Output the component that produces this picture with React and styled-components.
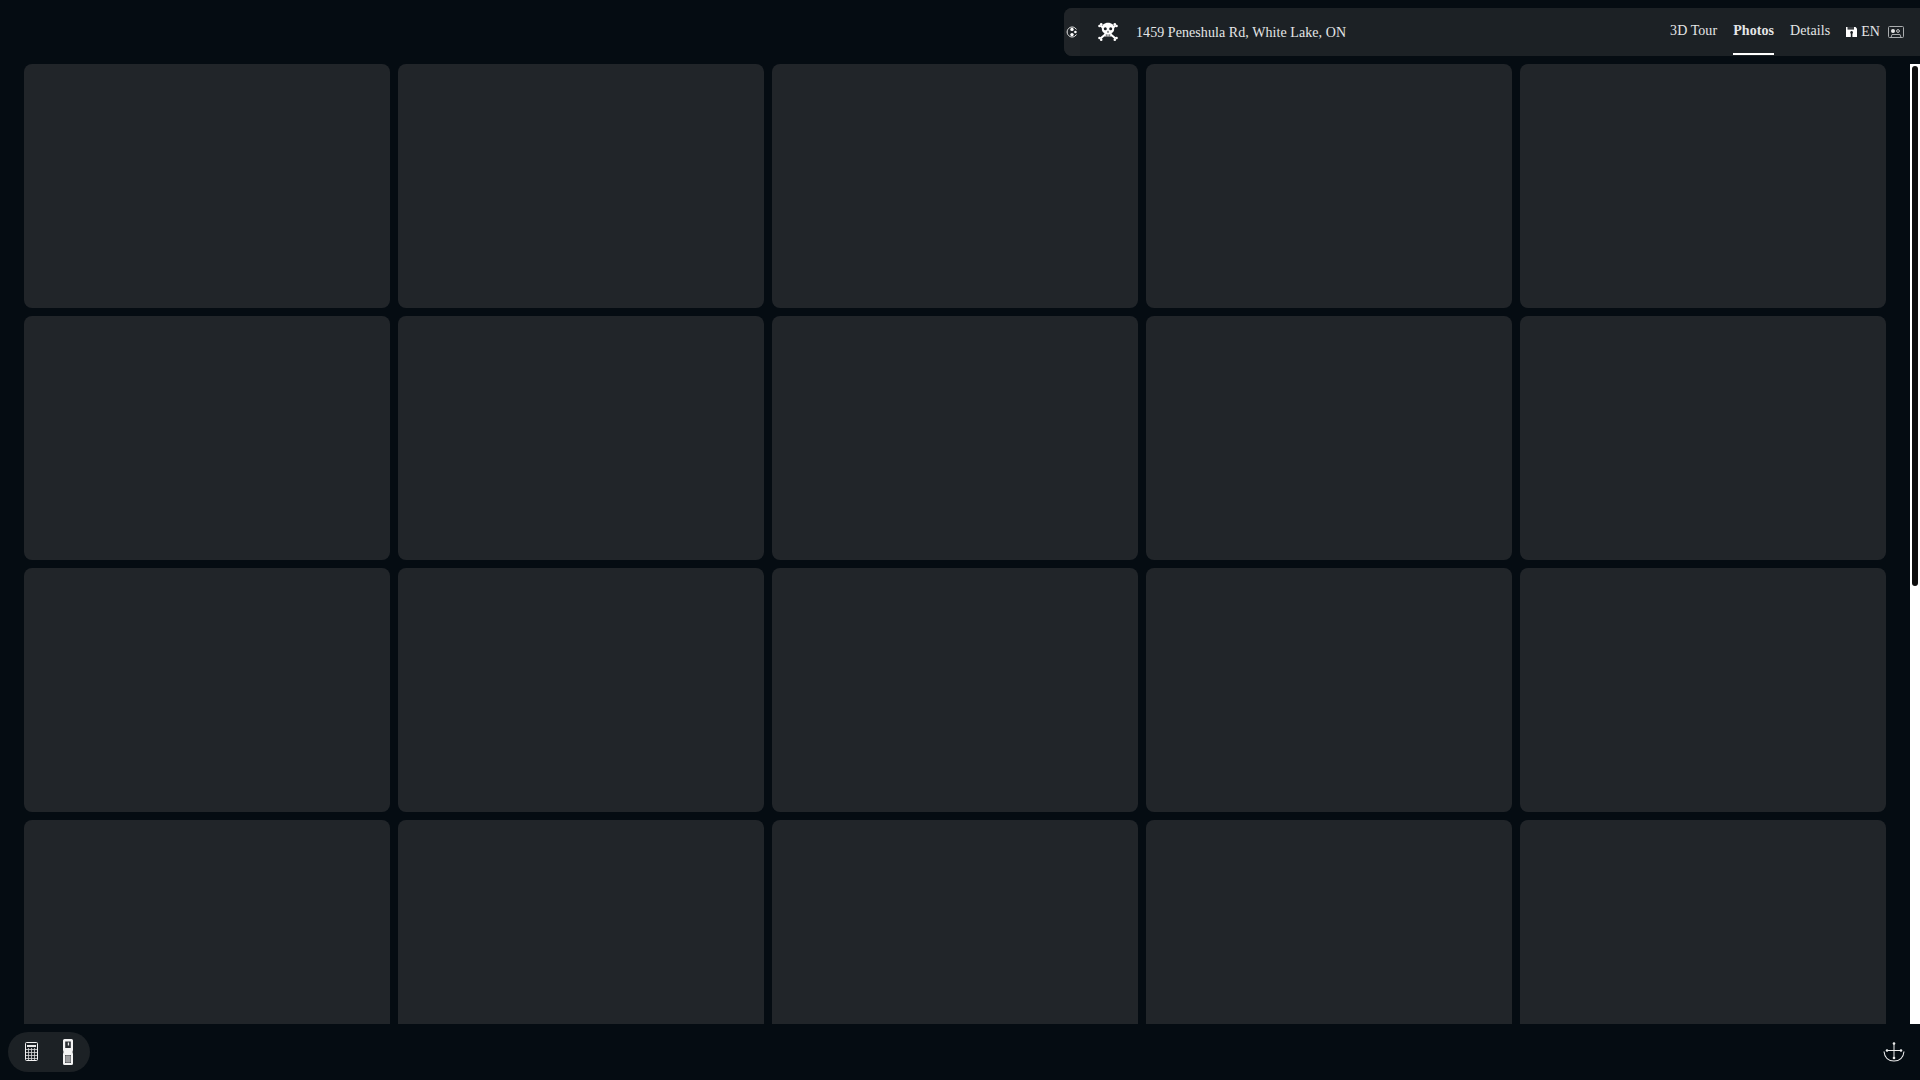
import styled, { createGlobalStyle } from 'styled-components'

const GlobalStyle = createGlobalStyle`
    html, body {
        margin: 0;
        height: 100%;
        overflow: hidden;
        background: #050c12;
        font-family: "Liberation Serif", serif;
    }
`

const photos = Array.from({ length: 20 }, (_, i) => i)

// icons, all hand drawn to match the little symbol glyphs
const DiscIcon = () => (
    <svg width="12" height="12" viewBox="0 0 12 12" fill="none">
        <path d="M8.5 1.6A5 5 0 1 0 8.5 10.4" stroke="#e8e8e8" strokeWidth="1" />
        <path d="M8.5 1.6L10.6 3.4M8.5 10.4L10.6 8.6" stroke="#e8e8e8" strokeWidth="1" />
        <circle cx="6" cy="3.4" r="1.7" fill="#fff" />
        <circle cx="6" cy="8.6" r="1.7" fill="#fff" />
        <circle cx="9.4" cy="6" r="1.3" fill="#fff" />
    </svg>
)

const SkullIcon = () => (
    <svg width="20" height="20" viewBox="0 0 20 20">
        <path d="M2.5 3.500L17.500 16.500M17.500 3.500L2.500 16.500" stroke="#fff" strokeWidth="2" />
        <circle cx="1.500" cy="4" r="1.300" fill="#fff" />
        <circle cx="3.200" cy="2.200" r="1.300" fill="#fff" />
        <circle cx="18.500" cy="4" r="1.300" fill="#fff" />
        <circle cx="16.800" cy="2.200" r="1.300" fill="#fff" />
        <circle cx="1.500" cy="16" r="1.300" fill="#fff" />
        <circle cx="3.200" cy="17.800" r="1.300" fill="#fff" />
        <circle cx="18.500" cy="16" r="1.300" fill="#fff" />
        <circle cx="16.800" cy="17.800" r="1.300" fill="#fff" />
        <path d="M10 .8C6.200 .8 3.800 3 3.800 6.400c0 2.400 1 3.900 2.600 4.700V14.500h7.200V11.100c1.600-.8 2.600-2.300 2.600-4.700C16.200 3 13.800 .8 10 .8z" fill="#fff" />
        <circle cx="7.300" cy="6.800" r="1.500" fill="#1c2125" />
        <circle cx="12.700" cy="6.800" r="1.500" fill="#1c2125" />
        <path d="M10 8.500l.9 1.900H9.100z" fill="#1c2125" />
        <path d="M8.300 12.300v2.200M10 12.300v2.200M11.700 12.300v2.200" stroke="#1c2125" strokeWidth=".7" />
    </svg>
)

const FloppyIcon = () => (
    <svg width="11" height="10" viewBox="0 0 11 10">
        <path d="M0 0h9.500L11 1.500V10H0z" fill="#fff" />
        <rect x="1.500" y="0" width="6.500" height="2.600" fill="#3a3e42" />
        <rect x="4.800" y="5" width="1.600" height="5" fill="#1c2125" />
        <circle cx="5.600" cy="5.400" r="1.300" fill="#1c2125" />
    </svg>
)

const TapeIcon = () => (
    <svg width="16" height="12" viewBox="0 0 16 12" fill="none">
        <rect x=".5" y=".5" width="15" height="11" rx="1" stroke="#a9acae" />
        <circle cx="5" cy="5" r="2" fill="#e8e8e8" />
        <circle cx="10" cy="5" r="1.400" stroke="#c8c8c8" />
        <path d="M3 11.500L4 8.500H12L13 11.500" stroke="#a9acae" />
    </svg>
)

const CalculatorIcon = () => (
    <svg width="13" height="19" viewBox="0 0 13 19" fill="none">
        <rect x=".5" y=".5" width="12" height="18" rx="1" stroke="#f2f2f2" />
        <rect x="2" y="3" width="9" height="2" fill="#e8e8e8" />
        <path d="M1 7.500H12M1 10.500H12M1 13.500H12M1 16.500H12M3.500 6V18M6.500 6V18M9.500 6V18" stroke="#d8d8d8" strokeWidth=".8" />
    </svg>
)

const PhoneIcon = () => (
    <svg width="11" height="26" viewBox="0 0 11 26">
        <path d="M1.500 0h7A1.500 1.500 0 0 1 10 1.500V11l-.5 2 .5 2v9.500A1.500 1.500 0 0 1 8.500 26h-7A1.500 1.500 0 0 1 0 24.500V15l.5-2L0 11V1.500A1.500 1.500 0 0 1 1.500 0z" fill="#f4f4f4" />
        <rect x="2.200" y="2.500" width="5.600" height="6.500" fill="#2b2f33" />
        <rect x="4.800" y="3.500" width="1.300" height="3" fill="#e8e8e8" />
        <rect x="2.200" y="16" width="5.600" height="8" fill="#2b2f33" />
        <path d="M2.200 18H7.800M2.200 20H7.800M2.200 22H7.800M4 16V24M6 16V24" stroke="#f0f0f0" strokeWidth=".7" />
    </svg>
)

const AnchorIcon = () => (
    <svg width="22" height="20" viewBox="0 0 22 20" fill="none">
        <path d="M11 1V17M4 8.500H18" stroke="#ececec" strokeWidth="1" />
        <path d="M1 9.500C1.500 15.500 5.500 19 11 19C16.500 19 20.500 15.500 21 9.500" stroke="#ececec" strokeWidth="1.100" />
        <circle cx="11" cy="1.500" r="1.300" fill="#ececec" />
        <circle cx="4" cy="8.500" r="1.300" fill="#ececec" />
        <circle cx="18" cy="8.500" r="1.300" fill="#ececec" />
        <circle cx="11" cy="16" r="1.300" fill="#ececec" />
    </svg>
)

const App = () => {
    return (
        <Page>
            <GlobalStyle />
            <TopBar>
                <InfoPanel>
                    <Handle>
                        <DiscIcon />
                    </Handle>
                    <Logo>
                        <SkullIcon />
                    </Logo>
                    <Address>1459 Peneshula Rd, White Lake, ON</Address>
                    <Tabs>
                        <Tab>3D Tour</Tab>
                        <Tab $active>Photos</Tab>
                        <Tab>Details</Tab>
                    </Tabs>
                    <Lang>
                        <FloppyIcon />
                        EN
                    </Lang>
                    <Tape>
                        <TapeIcon />
                    </Tape>
                </InfoPanel>
            </TopBar>
            <Gallery>
                <Grid>
                    {photos.map((p) => (
                        <Photo key={p} />
                    ))}
                </Grid>
                <ScrollTrack>
                    <ScrollThumb />
                </ScrollTrack>
            </Gallery>
            <BottomBar>
                <Tools>
                    <CalculatorIcon />
                    <PhoneIcon />
                </Tools>
                <AnchorIcon />
            </BottomBar>
        </Page>
    )
}

const Page = styled.div`
    width: 1920px;
    height: 1080px;
    display: flex;
    flex-direction: column;
    background: #050c12;
    color: #e4e6e7;
`

const TopBar = styled.header`
    height: 64px;
    flex: none;
    display: flex;
    justify-content: flex-end;
    padding-top: 8px;
    box-sizing: border-box;
`

const InfoPanel = styled.div`
    width: 856px;
    height: 48px;
    display: flex;
    align-items: center;
    background: #1c2125;
    border-radius: 8px 0 0 8px;
    font-size: 14px;
    letter-spacing: .07px;
`

const Handle = styled.div`
    width: 16px;
    height: 48px;
    flex: none;
    display: flex;
    align-items: center;
    overflow: hidden;
    padding-left: 2px;
    box-sizing: border-box;
    background: #202428;
    border-radius: 8px 0 0 8px;
`

const Logo = styled.div`
    margin-left: 18px;
    width: 20px;
    height: 20px;
`

const Address = styled.div`
    margin-left: 18px;
    padding-top: 2px;
    flex: 1;
`

const Tabs = styled.nav`
    display: flex;
    gap: 16px;
    height: 47px;
    align-self: flex-start;
    margin-right: -1px;
`

const Tab = styled.div`
    display: flex;
    align-items: center;
    padding-top: 1px;
    box-sizing: border-box;
    font-weight: ${(p) => (p.$active ? 700 : 400)};
    border-bottom: 2px solid ${(p) => (p.$active ? '#fff' : 'transparent')};
`

const Lang = styled.div`
    margin-left: 17px;
    display: flex;
    gap: 4px;
    align-items: center;
`

const Tape = styled.div`
    margin: 0 16px 1px 8px;
    display: flex;
`

const Gallery = styled.main`
    flex: 1;
    min-height: 0;
    overflow: hidden;
    display: flex;
    justify-content: space-between;
    padding-left: 24px;
`

const Grid = styled.div`
    width: 1862px;
    align-self: flex-start;
    display: grid;
    grid-template-columns: repeat(5, 366px);
    grid-auto-rows: 244px;
    gap: 8px;
`

const ScrollTrack = styled.div`
    width: 10px;
    flex: none;
    padding: 2px 2px 0;
    box-sizing: border-box;
    background: #fff;
`

const ScrollThumb = styled.div`
    width: 6px;
    height: 520px;
    background: #0d0d0d;
    border-radius: 3px;
`

const Photo = styled.div`
    background: #212529;
    border-radius: 8px;
`

const BottomBar = styled.footer`
    height: 56px;
    flex: none;
    display: flex;
    align-items: center;
    justify-content: space-between;
    padding: 0 15px 0 8px;
    box-sizing: border-box;
`

const Tools = styled.div`
    width: 82px;
    height: 40px;
    display: flex;
    align-items: center;
    gap: 25px;
    padding-left: 17px;
    box-sizing: border-box;
    background: #1c2125;
    border-radius: 20px;
    svg:first-child {
        margin-top: -1px;
    }
`

export default App
